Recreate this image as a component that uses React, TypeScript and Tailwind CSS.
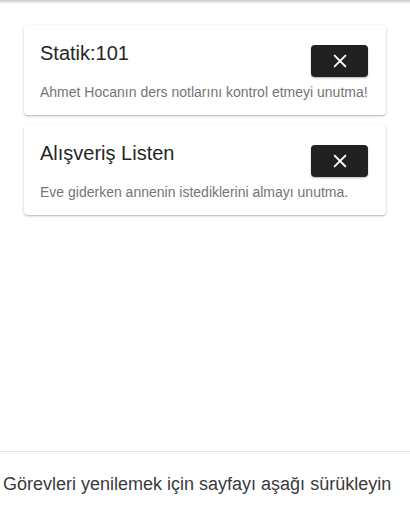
import React from 'react';

const tasks = [
  { title: 'Statik:101', note: 'Ahmet Hocanın ders notlarını kontrol etmeyi unutma!' },
  { title: 'Alışveriş Listen', note: 'Eve giderken annenin istediklerini almayı unutma.' },
];

const CloseIcon = () => (
  <svg width="18" height="18" viewBox="0 0 24 24" fill="none" stroke="white" strokeWidth="2.4" strokeLinecap="square">
    <path d="M5 5 L19 19 M19 5 L5 19" />
  </svg>
);

export default function App() {
  return (
    <div className="h-[507px] flex flex-col bg-white font-['Liberation_Sans',Arial,sans-serif] overflow-hidden">
      <div className="h-[4px] bg-gradient-to-b from-[#c8c8c8] to-white" />
      <div className="flex-1 flex flex-col gap-[10px] px-[24px] pt-[21px]">
        {tasks.map((t, i) => (
          <div
            key={i}
            className="bg-white rounded-[4px] shadow-[0_1px_3px_rgba(0,0,0,0.2),0_1px_1px_rgba(0,0,0,0.12)] pl-4 pr-[18px] pt-4 pb-[14px]"
          >
            <div className="flex justify-between items-start">
              <div className="text-[20px] leading-[24px] text-[#262626]">{t.title}</div>
              <button className="mt-1 w-[57px] h-[32px] rounded-[4px] bg-[#212121] flex items-center justify-center shadow-[0_1px_2px_rgba(0,0,0,0.3)]">
                <CloseIcon />
              </button>
            </div>
            <div className="mt-[6px] text-[14px] leading-[18px] text-[#757575] whitespace-nowrap">{t.note}</div>
          </div>
        ))}
      </div>
      <div className="h-[56px] border-t border-[#e6e6e6] pt-[20px] pl-[3px]">
        <div className="text-[18px] leading-[24px] text-[#3a3a3a] whitespace-nowrap">
          Görevleri yenilemek için sayfayı aşağı sürükleyin
        </div>
      </div>
    </div>
  );
}
